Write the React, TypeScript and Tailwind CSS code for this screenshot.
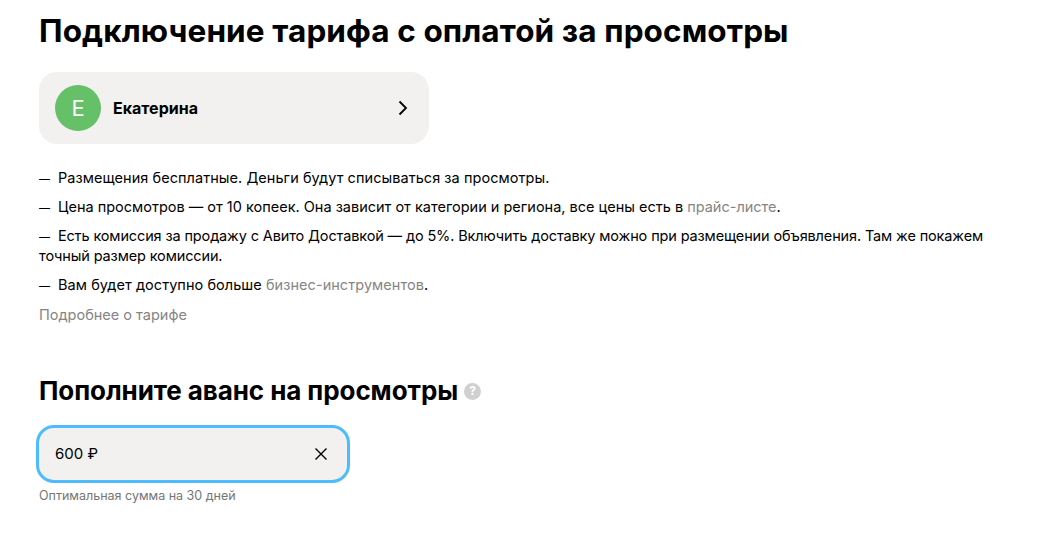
import { type JSX } from "react";

const font = { fontFamily: '"Inter", "Noto Sans", sans-serif' };

function Dash(): JSX.Element {
  return <span className="mr-2 text-[11px] leading-none">—</span>;
}

export default function App(): JSX.Element {
  return (
    <div className="min-h-[553px] bg-white pl-[39px] pt-[11px] text-black" style={font}>
      <h1 className="text-[31.5px] leading-10 font-bold tracking-[0.1px]">
        Подключение тарифа с оплатой за просмотры
      </h1>

      <div className="mt-[21px] flex h-[72px] w-[390px] items-center rounded-[18px] bg-[#f2f1f0] pl-4 pr-5">
        <div className="flex h-[46px] w-[46px] items-center justify-center rounded-full bg-[#65c068] text-[22px] text-white">
          Е
        </div>
        <span className="ml-3 flex-1 text-base font-bold">Екатерина</span>
        <svg width="12" height="16" viewBox="0 0 12 16" fill="none" stroke="black" strokeWidth="1.8">
          <path d="M2.500 1.500 9 8l-6.500 6.500" />
        </svg>
      </div>

      <div className="mt-6 w-[955px] text-[14.500px] leading-5">
        <p className="tracking-[0.05px]"><Dash />Размещения бесплатные. Деньги будут списываться за просмотры.</p>
        <p className="mt-[9px]">
          <Dash />Цена просмотров — от 10 копеек. Она зависит от категории и региона, все цены есть в{" "}
          <span className="text-[#858585]">прайс-листе</span>.
        </p>
        <p className="mt-[9px] tracking-[-0.13px]">
          <Dash />Есть комиссия за продажу с Авито Доставкой — до 5%. Включить доставку можно при размещении объявления. Там же покажем точный размер комиссии.
        </p>
        <p className="mt-[9px] tracking-[0.05px]">
          <Dash />Вам будет доступно больше <span className="text-[#858585]">бизнес-инструментов</span>.
        </p>
        <p className="mt-[10px] text-[#858585]">Подробнее о тарифе</p>
      </div>

      <div className="mt-[50px] flex items-center">
        <h2 className="text-[26px] leading-8 font-bold tracking-[-0.08px]">Пополните аванс на просмотры</h2>
        <span className="ml-1.5 flex h-[17px] w-[17px] items-center justify-center rounded-full bg-[#d0d0d0] text-xs font-bold text-white">
          ?
        </span>
      </div>

      <div className="mt-[18px] -ml-[3px] flex h-[58px] w-[314px] items-center justify-between rounded-[18px] border-[3px] border-[#4cbcfd] bg-[#f2f1f0] pl-4 pr-[19px]">
        <span className="text-[15px]">600 ₽</span>
        <svg width="14" height="14" viewBox="0 0 14 14" fill="none" stroke="black" strokeWidth="1.4">
          <path d="M1.500 1.500l11 11M12.500 1.500l-11 11" />
        </svg>
      </div>

      <p className="mt-[5px] text-[12.500px] leading-4 text-[#757575]">Оптимальная сумма на 30 дней</p>
    </div>
  );
}
